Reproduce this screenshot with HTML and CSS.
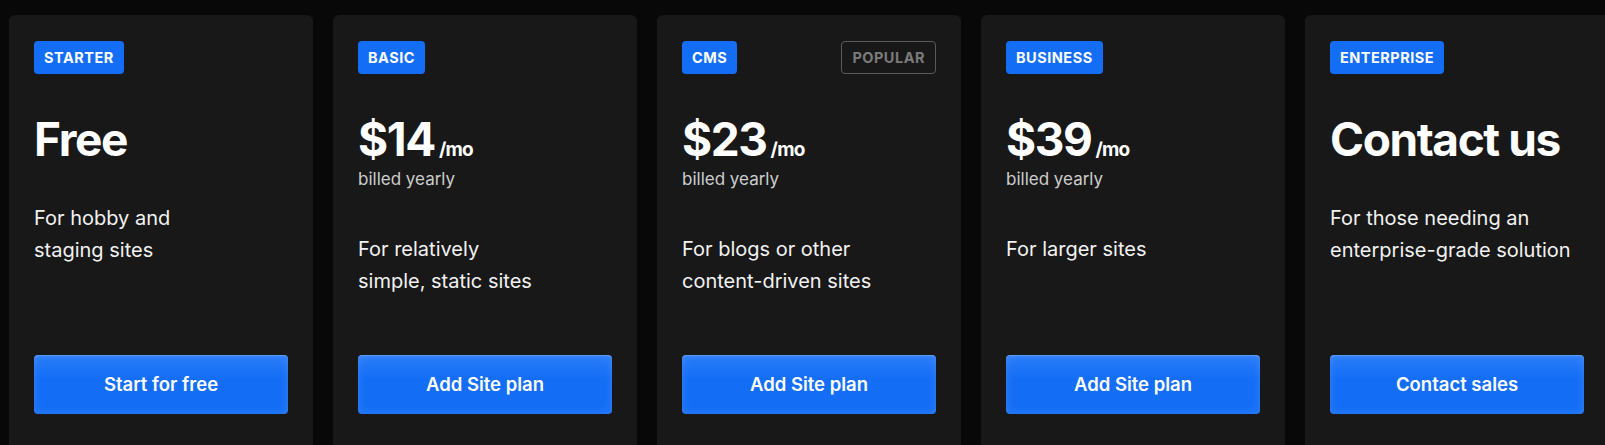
FILE: index.html
```html
<!DOCTYPE html>
<html lang="en">
<head>
    <meta charset="UTF-8">
    <title>Site plans</title>
    <link rel="stylesheet" href="styles.css">
</head>
<body>
    <div class="plans">
        <div class="plan">
            <div class="plan-top">
                <div class="plan-head"><span class="tag">Starter</span></div>
                <div class="price">Free</div>
                <p class="desc desc-solo">For hobby and<br>staging sites</p>
            </div>
            <a class="btn" href="#">Start for free</a>
        </div>
        <div class="plan">
            <div class="plan-top">
                <div class="plan-head"><span class="tag">Basic</span></div>
                <div class="price">$14<span class="per">/mo</span></div>
                <div class="billed">billed yearly</div>
                <p class="desc">For relatively<br>simple, static sites</p>
            </div>
            <a class="btn" href="#">Add Site plan</a>
        </div>
        <div class="plan">
            <div class="plan-top">
                <div class="plan-head"><span class="tag">CMS</span><span class="popular">Popular</span></div>
                <div class="price">$23<span class="per">/mo</span></div>
                <div class="billed">billed yearly</div>
                <p class="desc">For blogs or other<br>content-driven sites</p>
            </div>
            <a class="btn" href="#">Add Site plan</a>
        </div>
        <div class="plan">
            <div class="plan-top">
                <div class="plan-head"><span class="tag">Business</span></div>
                <div class="price">$39<span class="per">/mo</span></div>
                <div class="billed">billed yearly</div>
                <p class="desc">For larger sites</p>
            </div>
            <a class="btn" href="#">Add Site plan</a>
        </div>
        <div class="plan">
            <div class="plan-top">
                <div class="plan-head"><span class="tag">Enterprise</span></div>
                <div class="price">Contact us</div>
                <p class="desc desc-solo">For those needing an<br>enterprise-grade solution</p>
            </div>
            <a class="btn" href="#">Contact sales</a>
        </div>
    </div>
</body>
</html>
```

FILE: styles.css
```css
html, body{
    margin: 0;
    height: 100%;
    overflow: hidden;
    background: #080808;
    font-family: Inter, "Noto Sans", sans-serif;
    color: #fff;
}
.plans{
    display: flex;
    gap: 20px;
    padding: 15px 0 0 9px;
}
.plan{
    flex: 0 0 304px;
    box-sizing: border-box;
    height: 470px;
    padding: 26px 25px;
    background: #181818;
    border-radius: 6px;
    display: flex;
    flex-direction: column;
}
.plan-top{
    min-height: 314px;
}
.plan-head{
    display: flex;
    justify-content: space-between;
    align-items: center;
    height: 33px;
}
.tag, .popular{
    box-sizing: border-box;
    height: 33px;
    line-height: 33px;
    padding: 0 10px;
    border-radius: 4px;
    font-size: 14.5px;
    font-weight: 700;
    letter-spacing: 0.5px;
    text-transform: uppercase;
}
.tag{
    background: #146ef5;
    color: #fff;
}
.popular{
    line-height: 31px;
    border: 1px solid #5a5a5a;
    color: #7b7b7b;
}
.price{
    margin-top: 40px;
    font-size: 46px;
    line-height: 50px;
    height: 50px;
    font-weight: 700;
    letter-spacing: -1.4px;
}
.per{
    margin-left: 4px;
    font-size: 19px;
    line-height: 1;
    letter-spacing: -0.8px;
}
.billed{
    margin-top: 3px;
    font-size: 17px;
    line-height: 24px;
    color: #cdcdcd;
}
.desc{
    margin: 43px 0 0;
    font-size: 20px;
    line-height: 31.5px;
    color: #f2f2f2;
}
.desc-solo{
    margin-top: 39px;
}
.btn{
    display: block;
    height: 59px;
    line-height: 59px;
    text-align: center;
    text-decoration: none;
    color: #fff;
    font-size: 18.5px;
    font-weight: 600;
    background: linear-gradient(#2a7cf7, #146ef5 40%);
    border-radius: 4px;
    box-shadow: inset 0 0 10px rgba(255,255,255,0.12), inset 0 1px 1px rgba(255,255,255,0.2);
}
```
